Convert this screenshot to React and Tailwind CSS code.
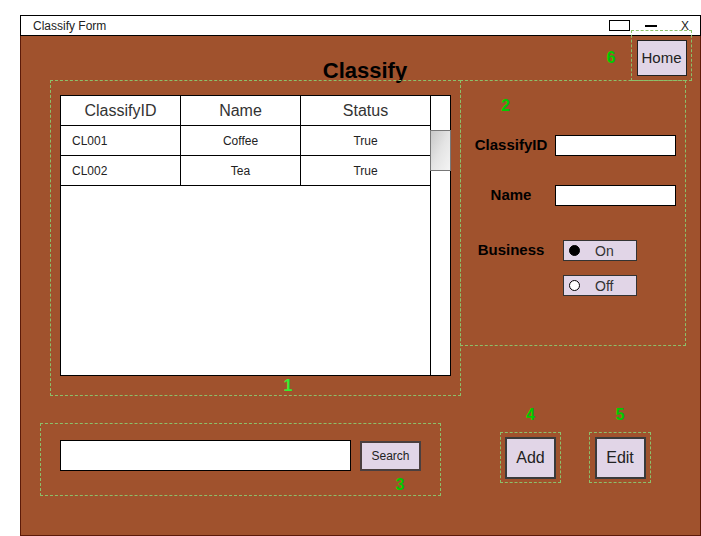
import React from 'react';

const rows = [
  { id: 'CL001', name: 'Coffee', status: 'True' },
  { id: 'CL002', name: 'Tea', status: 'True' },
];

function Radio({ label, checked }) {
  return (
    <div className="flex h-[21px] w-[74px] items-center border border-[#333] bg-[#e1d5e7] pl-[5px]">
      <span
        className={`h-[11px] w-[11px] rounded-full border border-black ${checked ? 'bg-black' : 'bg-white'}`}
      />
      <span className="ml-[15px] text-[14px] leading-none text-[#333]">{label}</span>
    </div>
  );
}

export default function App() {
  return (
    <div className="h-[536px] w-[701px] bg-white font-['Liberation_Sans',Arial,sans-serif] text-black">
      <div className="relative ml-[20px] w-[681px] pt-[15px]">
        {/* title bar */}
        <div className="flex h-[21px] items-center border border-black bg-white pl-[12px] pr-[11px]">
          <span className="text-[12px] text-[#222]">Classify Form</span>
          <div className="ml-auto flex items-center">
            <span className="h-[11px] w-[21px] border border-black" />
            <span className="ml-[15px] h-[2px] w-[12px] bg-black" />
            <span className="ml-[24px] text-[12px] leading-none text-[#222]">X</span>
          </div>
        </div>

        {/* body */}
        <div className="h-[500px] border-x border-b border-[#5c1a08] bg-[#a0522d]">
          <div className="h-[44px] pt-[24px] text-center text-[22px] font-bold leading-[22px] pl-[9px]">
            Classify
          </div>

          <div className="flex items-start">
            {/* box 1: table */}
            <div className="ml-[29px] h-[316px] w-[411px] border border-dashed border-[#8cc06a] pl-[9px] pt-[14px]">
              <div className="flex h-[281px] w-[391px] border border-black bg-white">
                <div className="w-[369px]">
                  <div className="grid h-[30px] grid-cols-[120px_120px_129px] border-b border-black text-[16px] text-[#333]">
                    <div className="flex items-center justify-center border-r border-black">ClassifyID</div>
                    <div className="flex items-center justify-center border-r border-black">Name</div>
                    <div className="flex items-center justify-center">Status</div>
                  </div>
                  {rows.map((r) => (
                    <div
                      key={r.id}
                      className="grid h-[30px] grid-cols-[120px_120px_129px] border-b border-black text-[12px] text-[#222]"
                    >
                      <div className="flex items-center border-r border-black pl-[11px]">{r.id}</div>
                      <div className="flex items-center justify-center border-r border-black">{r.name}</div>
                      <div className="flex items-center justify-center">{r.status}</div>
                    </div>
                  ))}
                </div>
                <div className="w-[20px] border-l border-black">
                  <div className="-ml-px mt-[34px] h-[41px] w-[21px] border border-[#777] bg-linear-to-br from-[#c8c8c8] via-[#e4e4e4] to-[#f4f4f4]" />
                </div>
              </div>
              <div className="ml-[218px] w-[20px] text-center text-[16px] font-bold leading-[20px] text-[#33ee33]">1</div>
            </div>

            {/* box 2: form */}
            <div className="-ml-px h-[266px] w-[226px] border border-dashed border-[#8cc06a]">
              <div className="pl-[40px] pt-[15px] text-[16px] font-bold leading-[20px] text-[#00cc00]">2</div>
              <div className="mt-[19px] flex h-[21px] items-center">
                <div className="ml-[6px] w-[88px] text-center text-[15px] font-bold">ClassifyID</div>
                <div className="h-[21px] w-[121px] border border-black bg-white" />
              </div>
              <div className="mt-[29px] flex h-[21px] items-center">
                <div className="ml-[6px] w-[88px] text-center text-[15px] font-bold">Name</div>
                <div className="h-[21px] w-[121px] border border-black bg-white" />
              </div>
              <div className="mt-[34px] flex h-[21px] items-center">
                <div className="ml-[6px] w-[88px] text-center text-[15px] font-bold">Business</div>
                <div className="ml-[8px]">
                  <Radio label="On" checked />
                </div>
              </div>
              <div className="mt-[14px] flex h-[21px] items-center">
                <div className="ml-[6px] w-[88px]" />
                <div className="ml-[8px]">
                  <Radio label="Off" />
                </div>
              </div>
            </div>
          </div>

          {/* bottom row */}
          <div className="mt-[9px] flex items-start">
            <div className="ml-[19px] mt-[18px] h-[73px] w-[401px] border border-dashed border-[#8cc06a] pl-[19px] pt-[16px]">
              <div className="flex items-center">
                <div className="h-[31px] w-[291px] border border-black bg-white" />
                <button className="ml-[9px] h-[30px] w-[61px] border-2 border-[#4a3f3f] bg-[#e1d5e7] text-[12px] text-[#222]">
                  Search
                </button>
              </div>
              <div className="ml-[330px] mt-[4px] w-[20px] text-center text-[16px] font-bold leading-[20px] text-[#00cc00]">3</div>
            </div>

            <div className="ml-[59px] flex flex-col items-center">
              <div className="text-[16px] font-bold leading-[20px] text-[#00cc00]">4</div>
              <div className="mt-[7px] flex h-[51px] w-[61px] items-center justify-center border border-dashed border-[#8cc06a]">
                <button className="h-[42px] w-[51px] border-2 border-[#3a3a3a] bg-[#e1d5e7] text-[16px] text-[#222]">
                  Add
                </button>
              </div>
            </div>

            <div className="ml-[28px] flex flex-col items-center">
              <div className="text-[16px] font-bold leading-[20px] text-[#00cc00]">5</div>
              <div className="mt-[7px] flex h-[51px] w-[62px] items-center justify-center border border-dashed border-[#8cc06a]">
                <button className="h-[42px] w-[51px] border-2 border-[#3a3a3a] bg-[#e1d5e7] text-[16px] text-[#222]">
                  Edit
                </button>
              </div>
            </div>
          </div>
        </div>

        {/* annotation 6 overlays the title bar */}
        <div className="absolute left-[585px] top-[48px] w-[12px] text-center text-[16px] font-bold leading-[20px] text-[#00cc00]">6</div>
        <div className="absolute left-[611px] top-[30px] flex h-[51px] w-[61px] items-start justify-center border border-dashed border-[#8cc06a] pt-[9px]">
          <button className="h-[36px] w-[50px] border border-[#222] bg-[#e1d5e7] text-[15px] text-[#222]">
            Home
          </button>
        </div>
      </div>
    </div>
  );
}
